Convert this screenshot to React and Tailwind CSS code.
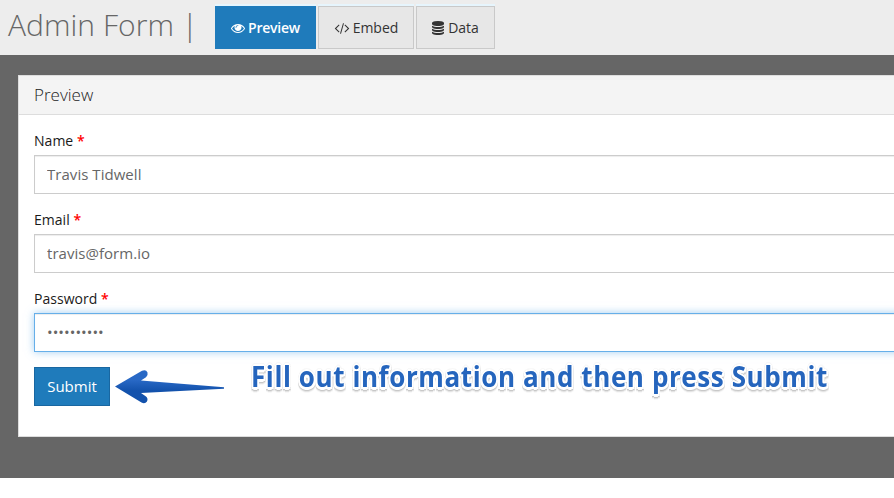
const EYE =
  "M1664 960q-152-236-381-353 61 104 61 225 0 185-131.5 316.5t-316.5 131.5-316.5-131.5-131.5-316.5q0-121 61-225-229 117-381 353 133 205 333.5 326.5t434.5 121.5 434.5-121.5 333.5-326.5zm-720-384q0-20-14-34t-34-14q-125 0-214.5 89.5t-89.5 214.5q0 20 14 34t34 14 34-14 14-34q0-86 61-147t147-61q20 0 34-14t14-34zm848 384q0 34-20 69-140 230-376.5 368.5t-499.5 138.5-499.5-139-376.5-368q-20-35-20-69t20-69q140-229 376.5-368t499.5-139 499.5 139 376.5 368q20 35 20 69z";
const CODE =
  "M681 1399l-50 50q-10 10-23 10t-23-10l-466-466q-10-10-10-23t10-23l466-466q10-10 23-10t23 10l50 50q10 10 10 23t-10 23l-393 393 393 393q10 10 10 23t-10 23zm591-1067l-373 1291q-4 13-15.5 19.5t-23.5 2.5l-62-17q-13-4-19.5-15.5t-2.5-24.5l373-1291q4-13 15.5-19.5t23.5-2.5l62 17q13 4 19.5 15.5t2.5 24.5zm657 651l-466 466q-10 10-23 10t-23-10l-50-50q-10-10-10-23t10-23l393-393-393-393q-10-10-10-23t10-23l50-50q10-10 23-10t23 10l466 466q10 10 10 23t-10 23z";
const DATABASE =
  "M896 768q237 0 443-43t325-127v170q0 69-103 128t-280 93.5-385 34.5-385-34.5-280-93.5-103-128v-170q119 84 325 127t443 43zm0 768q237 0 443-43t325-127v170q0 69-103 128t-280 93.5-385 34.5-385-34.5-280-93.5-103-128v-170q119 84 325 127t443 43zm0-384q237 0 443-43t325-127v170q0 69-103 128t-280 93.5-385 34.5-385-34.5-280-93.5-103-128v-170q119 84 325 127t443 43zm0-1152q208 0 385 34.5t280 93.5 103 128v128q0 69-103 128t-280 93.5-385 34.5-385-34.5-280-93.5-103-128v-128q0-69 103-128t280-93.5 385-34.5z";

function Icon({ d, viewBox, className }) {
  return (
    <svg viewBox={viewBox} className={className} fill="currentColor" aria-hidden="true">
      <path d={d} />
    </svg>
  );
}

function Tab({ label, children, className }) {
  return (
    <button
      className={`flex h-[43px] items-center justify-center border text-[14px] shadow-[0_-2px_0_#e6f5fd] ${className}`}
    >
      {children}
      <span>{label}</span>
    </button>
  );
}

function Field({ label, value, type = "text", inputClass }) {
  return (
    <label className="mb-[15px] block h-16">
      <span className="block h-[25px] text-[14px] leading-[22px] tracking-[0.03px] text-[#1a1a1a]">
        {label} <span className="font-semibold text-[#f00]">*</span>
      </span>
      <input
        type={type}
        defaultValue={value}
        className={`block h-[39px] w-full border bg-white px-3 pb-[2px] text-[15px] tracking-[0.04px] text-[#666] outline-none ${inputClass}`}
      />
    </label>
  );
}

const NORMAL = "border-[#ccc] shadow-[inset_0_1px_1px_rgba(0,0,0,0.075)]";
const FOCUSED =
  "border-[#66afe9] shadow-[inset_0_1px_1px_rgba(0,0,0,0.075),0_0_8px_rgba(102,175,233,0.6)]";

export default function App() {
  return (
    <div className="h-[498px] w-[894px] overflow-hidden bg-white font-['Open_Sans',sans-serif]">
      <header className="flex h-[55px] bg-[#ededed] pl-2">
        <h1 className="w-[207px] shrink-0 whitespace-pre text-[30px] font-light leading-[50px] tracking-[0.05px] text-[#666]">
          Admin Form |
        </h1>
        <nav className="flex gap-[2px] pt-[6px]">
          <Tab label="Preview" className="w-[101px] gap-[3px] border-[#1f7bbb] bg-[#1f7bbb] font-semibold tracking-[-0.25px] text-white">
            <Icon d={EYE} viewBox="0 0 1792 1792" className="size-[14px]" />
          </Tab>
          <Tab label="Embed" className="w-[96px] gap-[3px] border-[#c9c9c9] bg-[#e7e7e7] text-[#333]">
            <Icon d={CODE} viewBox="0 0 2048 1792" className="h-[14px] w-[16px]" />
          </Tab>
          <Tab label="Data" className="w-[79px] gap-[4px] border-[#c9c9c9] bg-[#e7e7e7] text-[#333]">
            <Icon d={DATABASE} viewBox="128 0 1536 1792" className="h-[14px] w-[12px]" />
          </Tab>
        </nav>
      </header>
      <main className="h-[423px] bg-[#666] pl-[18px] pt-5">
        <section className="h-[362px] w-[930px] border border-[#ddd] bg-white">
          <h2 className="h-[39px] border-b border-[#ddd] bg-[#f4f4f4] pl-[15px] text-[17px] font-light leading-[38px] text-[#222]">
            Preview
          </h2>
          <form className="px-[15px] pt-[15px]">
            <Field label="Name" value="Travis Tidwell" inputClass={NORMAL} />
            <Field label="Email" value="travis@form.io" inputClass={NORMAL} />
            <Field label="Password" value="secret1234" type="password" inputClass={FOCUSED} />
            <div className="flex">
              <button
                type="button"
                className="h-[39px] w-[76px] border border-[#1967a1] bg-[#1f7bbb] text-[15px] text-white"
              >
                Submit
              </button>
              <svg viewBox="0 0 120 44" className="h-[44px] w-[120px]" aria-hidden="true">
                <defs>
                  <linearGradient id="arrow" x1="0" y1="0" x2="0" y2="1">
                    <stop offset="0.3" stopColor="#2868c5" />
                    <stop offset="0.62" stopColor="#1352ac" />
                  </linearGradient>
                </defs>
                <path
                  d="M5 19.5 L32 3.8 Q36 2.2 37.5 5.5 Q38.3 8.5 36 10.3 L31 13.6 L114 20.2 V21.8 L31 26 L36 29.5 Q38.4 31.5 37 34.5 Q35 37.2 31.5 35.5 Z"
                  fill="url(#arrow)"
                />
              </svg>
              <p className="ml-[21px] -mt-[10px] origin-left scale-x-[0.93] whitespace-nowrap text-[28px] font-bold leading-[38px] tracking-[0.62px] text-[#2565bd] [filter:drop-shadow(0_1px_0.8px_rgba(0,0,0,0.32))] [text-shadow:2px_0_0_#fff,-2px_0_0_#fff,0_3px_0_#fff,0_-2px_0_#fff,2px_2px_0_#fff,-2px_2px_0_#fff,1px_-1px_0_#fff,-1px_-1px_0_#fff]">
                Fill out information and then press Submit
              </p>
            </div>
          </form>
        </section>
      </main>
    </div>
  );
}
